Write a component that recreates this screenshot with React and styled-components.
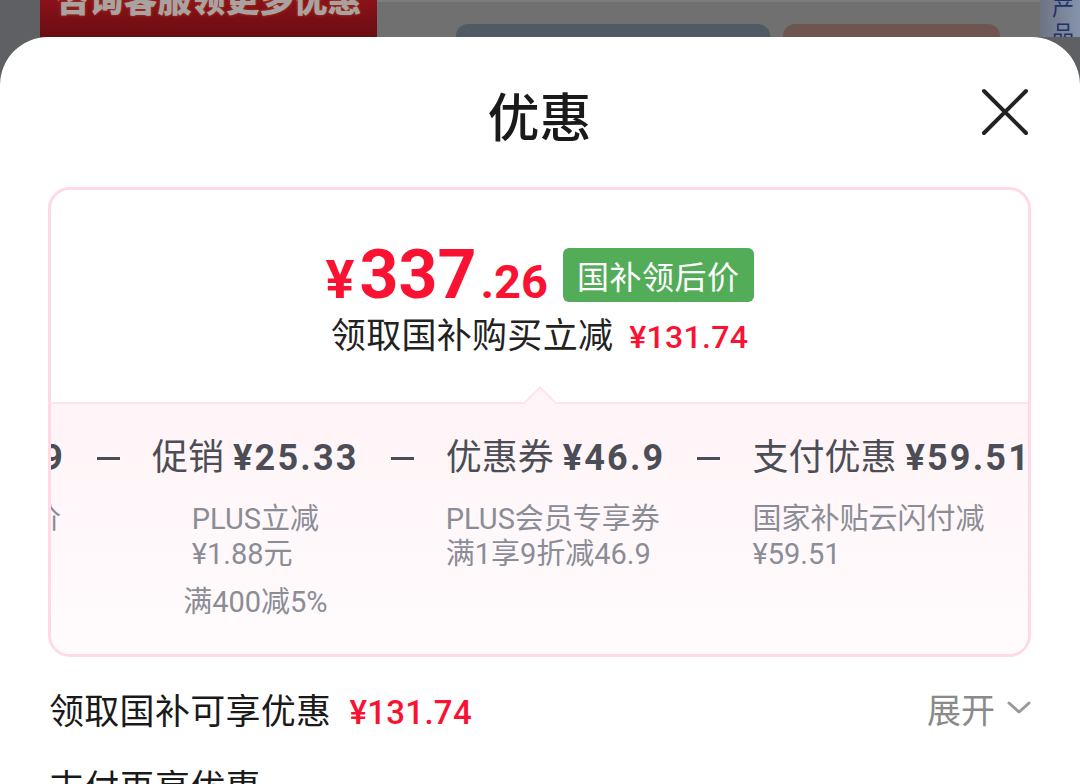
import React, { useLayoutEffect, useRef } from 'react'
import styled, { createGlobalStyle } from 'styled-components'

const GlobalStyle = createGlobalStyle`
  html, body {
    margin: 0;
    padding: 0;
    background: #5e6064;
  }
  body {
    font-family: Roboto, 'Noto Sans CJK SC', sans-serif;
    -webkit-font-smoothing: antialiased;
  }
`

const Page = styled.div`
  width: 1080px;
  height: 784px;
  overflow: hidden;
  display: flex;
  flex-direction: column;
  background: #5e6064;
`

/* dimmed product page behind the sheet */
const Backdrop = styled.div`
  height: 37px;
  flex: none;
  display: flex;
  overflow: hidden;
`
const BackGap = styled.div`
  width: ${p => p.w}px;
  flex: none;
`
const Banner = styled.div`
  width: 337px;
  flex: none;
  display: flex;
  align-items: flex-end;
  justify-content: center;
  padding-bottom: 19px;
  background: linear-gradient(180deg, #8a1219 0%, #6a0d13 100%);
  box-sizing: border-box;
  overflow: hidden;
`
const BannerText = styled.div`
  font-family: 'Noto Sans CJK SC', sans-serif;
  font-weight: 900;
  font-size: 34px;
  line-height: 40px;
  color: #a9a2a2;
  text-shadow: 0 0 3px #b0401f;
  white-space: nowrap;
`
const BackMiddle = styled.div`
  flex: 1;
  display: flex;
  gap: 13px;
  padding: 22px 40px 0 79px;
  background: #707070;
  border-top: 2px solid #7c7c7c;
  box-sizing: border-box;
`
const BackBlock = styled.div`
  width: ${p => p.w}px;
  height: 40px;
  border-radius: 12px;
  background: ${p => p.c};
`
const SideStrip = styled.div`
  width: 40px;
  flex: none;
  display: flex;
  justify-content: flex-end;
  padding-right: 6px;
  background: linear-gradient(90deg, #6d7482 0%, #8593aa 100%);
  box-sizing: border-box;
`
const SideText = styled.div`
  font-family: 'Noto Sans CJK SC', sans-serif;
  font-size: 22px;
  line-height: 26px;
  width: 22px;
  color: #24306a;
  margin-top: -8px;
`

/* the sheet */
const Sheet = styled.div`
  flex: 1;
  background: #fff;
  border-radius: 48px 48px 0 0;
  padding: 0 49px 0 48px;
  display: flex;
  flex-direction: column;
`
const Header = styled.div`
  display: grid;
  grid-template-columns: 1fr auto 1fr;
  align-items: center;
  padding-top: 50px;
  height: 56px;
`
const Title = styled.div`
  grid-column: 2;
  font-size: 52px;
  line-height: 56px;
  font-weight: 500;
  color: #1a1a1a;
  font-family: 'Noto Sans CJK SC', sans-serif;
`
const CloseButton = styled.button`
  grid-column: 3;
  justify-self: end;
  width: 50px;
  height: 50px;
  margin: -6px 1px 0 0;
  padding: 0;
  border: none;
  background: none;
  display: flex;
  align-items: center;
  justify-content: center;
`

const Card = styled.div`
  margin-top: 44px;
  border: 3px solid #ffd9e4;
  border-radius: 22px;
  overflow: hidden;
  display: flex;
  flex-direction: column;
`
const Summary = styled.div`
  height: 212px;
  padding-top: 58px;
  box-sizing: border-box;
  display: flex;
  flex-direction: column;
  align-items: center;
  background: #fff;
`
const PriceRow = styled.div`
  display: flex;
  align-items: center;
  height: 54px;
`
const Price = styled.div`
  display: flex;
  align-items: baseline;
  color: #fa1232;
  font-weight: 700;
  line-height: 56px;
  margin-top: 7px;
`
const PricePart = styled.span`
  font-size: ${p => p.size}px;
  margin-right: ${p => p.gap || 0}px;
  letter-spacing: ${p => p.ls || 0}px;
`
const Badge = styled.div`
  margin-left: 15px;
  height: 54px;
  padding: 0 14px;
  border-radius: 6px;
  background: #52ac58;
  color: #fff;
  font-size: 32px;
  line-height: 54px;
  font-family: 'Noto Sans CJK SC', sans-serif;
  letter-spacing: 0.5px;
`
const SaveLine = styled.div`
  margin-top: 11px;
  font-size: 35px;
  line-height: 48px;
  color: #222;
  display: flex;
  align-items: baseline;
  letter-spacing: 0.3px;
`
const RedAmount = styled.span`
  color: #fa1232;
  font-weight: 500;
  font-size: ${p => p.size || 32}px;
  margin-left: ${p => p.gap || 16}px;
  letter-spacing: 0.3px;
`

const Breakdown = styled.div`
  position: relative;
  border-top: 2px solid #ffe4ec;
  background: linear-gradient(180deg, #fff4f7 0%, #fffbfc 100%);
  height: 250px;
  &::before {
    content: '';
    position: absolute;
    left: 50%;
    top: -13px;
    width: 22px;
    height: 22px;
    margin-left: -12px;
    background: #fff4f7;
    border-top: 2px solid #ffe4ec;
    border-left: 2px solid #ffe4ec;
    transform: rotate(45deg);
  }
`
const ScrollRow = styled.div`
  overflow-x: auto;
  scrollbar-width: none;
  &::-webkit-scrollbar {
    display: none;
  }
`
const Track = styled.div`
  display: flex;
  align-items: flex-start;
  gap: 32px;
  padding: 32px 24px 0 24px;
  width: max-content;
`
const Item = styled.div`
  display: flex;
  flex-direction: column;
  align-items: ${p => (p.center ? 'center' : 'flex-start')};
  flex: none;
`
const ItemTitle = styled.div`
  font-size: 36px;
  line-height: 44px;
  color: #4b4e56;
  white-space: nowrap;
  b {
    font-weight: 700;
    margin-left: 9px;
    letter-spacing: 2.2px;
  }
`
const Tag = styled.div`
  margin-top: ${p => (p.first ? 22 : 13)}px;
  font-size: 29px;
  line-height: 35px;
  color: #8a8d96;
  white-space: nowrap;
  span {
    display: block;
  }
`
const Minus = styled.div`
  flex: none;
  width: 23px;
  height: 44px;
  display: flex;
  align-items: center;
  &::after {
    content: '';
    width: 23px;
    height: 3px;
    background: #4b4e56;
  }
`

const InfoRow = styled.div`
  margin-top: ${p => p.top}px;
  display: flex;
  align-items: center;
  justify-content: space-between;
  height: 56px;
  flex: none;
`
const InfoLabel = styled.div`
  display: flex;
  align-items: baseline;
  font-size: 35px;
  color: #1a1a1a;
  letter-spacing: 0.3px;
  padding-left: 1px;
`
const Expand = styled.div`
  display: flex;
  align-items: center;
  gap: 12px;
  font-size: 34px;
  color: #8a8a8a;
`

const steps = [
  { name: '京东价', amount: '¥469', tags: [['京东平台零售价']] },
  { name: '促销', amount: '¥25.33', tags: [['PLUS立减', '¥1.88元'], ['满400减5%']], center: true },
  { name: '优惠券', amount: '¥46.9', tags: [['PLUS会员专享券', '满1享9折减46.9']] },
  { name: '支付优惠', amount: '¥59.51', tags: [['国家补贴云闪付减', '¥59.51']] }
]

const CloseIcon = () => (
  <svg width="50" height="50" viewBox="0 0 50 50">
    <path d="M4 4 L46 46 M46 4 L4 46" stroke="#222" strokeWidth="4" strokeLinecap="round" />
  </svg>
)

const Chevron = () => (
  <svg width="24" height="14" viewBox="0 0 24 14">
    <path d="M2 2 L12 11 L22 2" fill="none" stroke="#999" strokeWidth="3" strokeLinecap="round" strokeLinejoin="round" />
  </svg>
)

const App = () => {
  const scrollRef = useRef(null)
  const firstRef = useRef(null)

  useLayoutEffect(() => {
    const box = scrollRef.current
    const first = firstRef.current
    if (!box || !first) return
    const offset = first.getBoundingClientRect().right - box.getBoundingClientRect().left - 14
    box.scrollLeft = offset
  }, [])

  return (
    <Page>
      <GlobalStyle />
      <Backdrop>
        <BackGap w={40} />
        <Banner>
          <BannerText>咨询客服领更多优惠</BannerText>
        </Banner>
        <BackMiddle>
          <BackBlock w={314} c="#4f5a64" />
          <BackBlock w={217} c="#6e5550" />
        </BackMiddle>
        <SideStrip>
          <SideText>产品</SideText>
        </SideStrip>
      </Backdrop>

      <Sheet>
        <Header>
          <Title>优惠</Title>
          <CloseButton aria-label="关闭">
            <CloseIcon />
          </CloseButton>
        </Header>

        <Card>
          <Summary>
            <PriceRow>
              <Price>
                <PricePart size={54} gap={5}>¥</PricePart>
                <PricePart size={68} gap={4}>337</PricePart>
                <PricePart size={47}>.26</PricePart>
              </Price>
              <Badge>国补领后价</Badge>
            </PriceRow>
            <SaveLine>
              领取国补购买立减
              <RedAmount>¥131.74</RedAmount>
            </SaveLine>
          </Summary>

          <Breakdown>
            <ScrollRow ref={scrollRef}>
              <Track>
                {steps.map((s, i) => (
                  <React.Fragment key={s.name}>
                    {i > 0 && <Minus />}
                    <Item center={s.center} ref={i === 0 ? firstRef : null}>
                      <ItemTitle>
                        {s.name}
                        <b>{s.amount}</b>
                      </ItemTitle>
                      {s.tags.map((lines, j) => (
                        <Tag key={lines[0]} first={j === 0}>
                          {lines.map(l => (
                            <span key={l}>{l}</span>
                          ))}
                        </Tag>
                      ))}
                    </Item>
                  </React.Fragment>
                ))}
              </Track>
            </ScrollRow>
          </Breakdown>
        </Card>

        <InfoRow top={23}>
          <InfoLabel>
            领取国补可享优惠
            <RedAmount size={33} gap={18}>¥131.74</RedAmount>
          </InfoLabel>
          <Expand>
            展开
            <Chevron />
          </Expand>
        </InfoRow>
        <InfoRow top={20}>
          <InfoLabel>支付再享优惠</InfoLabel>
        </InfoRow>
      </Sheet>
    </Page>
  )
}

export default App
